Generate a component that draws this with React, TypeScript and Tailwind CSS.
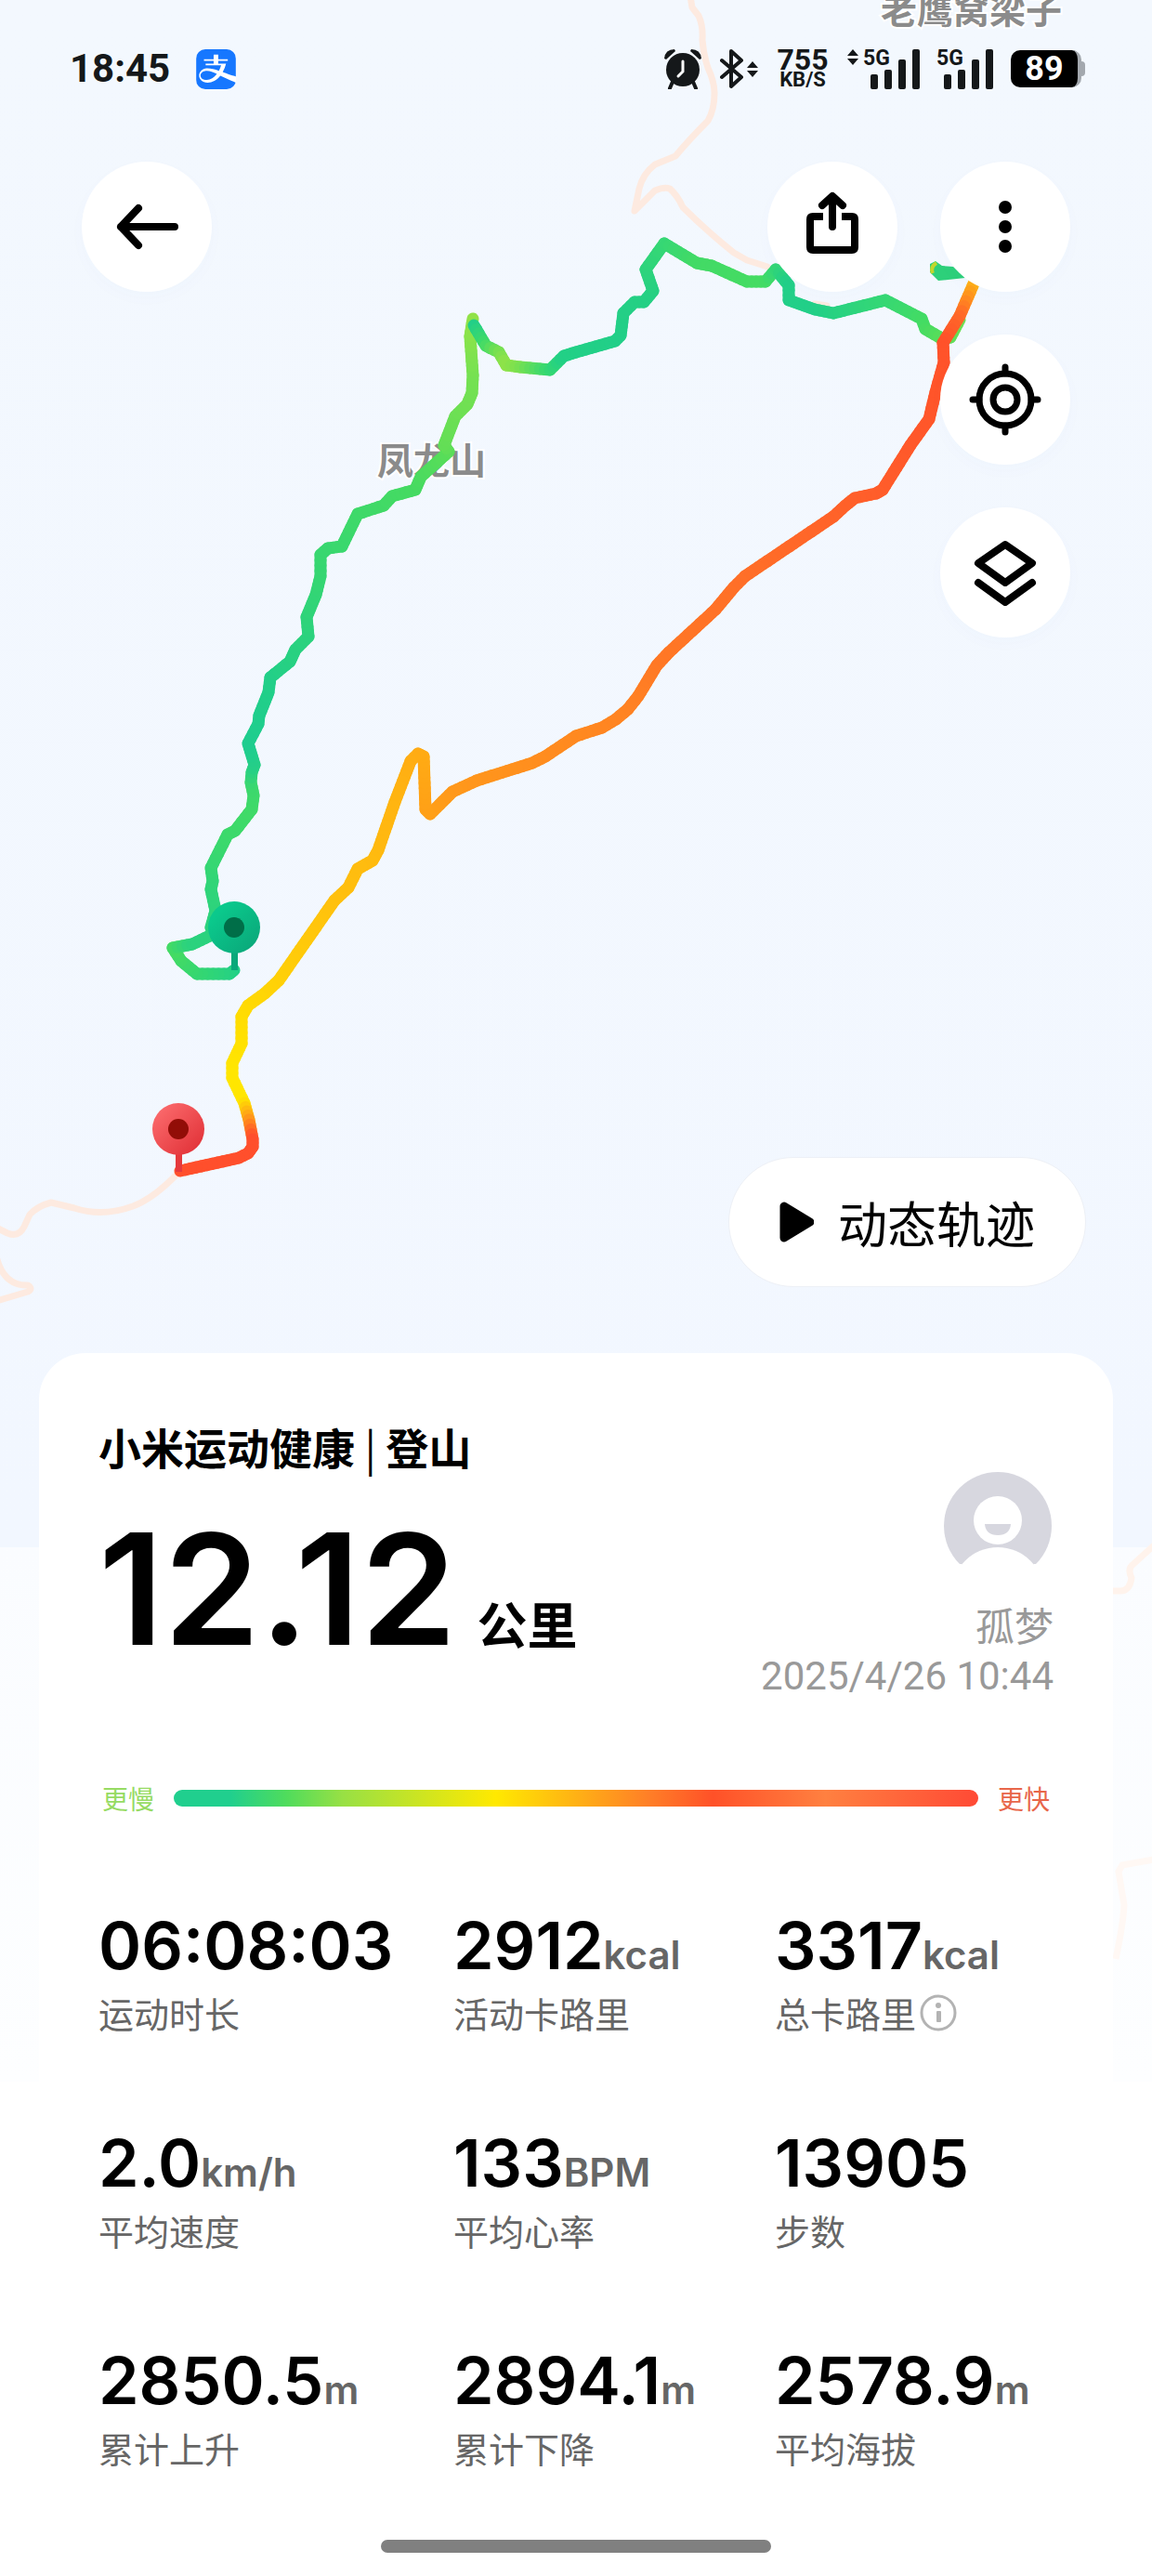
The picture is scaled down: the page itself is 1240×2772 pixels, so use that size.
import React from 'react';
import { SiAlipay } from 'react-icons/si';

type TrackPoint = [number, number, string?];

interface Stat {
  value: string;
  unit?: string;
  label: string;
  info?: boolean;
}

const STATS: Stat[] = [
  { value: '06:08:03', label: '运动时长' },
  { value: '2912', unit: 'kcal', label: '活动卡路里' },
  { value: '3317', unit: 'kcal', label: '总卡路里', info: true },
  { value: '2.0', unit: 'km/h', label: '平均速度' },
  { value: '133', unit: 'BPM', label: '平均心率' },
  { value: '13905', label: '步数' },
  { value: '2850.5', unit: 'm', label: '累计上升' },
  { value: '2894.1', unit: 'm', label: '累计下降' },
  { value: '2578.9', unit: 'm', label: '平均海拔' },
];

// Points without a colour take one between their coloured neighbours
const ASCENT: TrackPoint[] = [
  [252, 1044, '#22cf88'], [247, 1048], [212, 1048, '#33d673'], [195, 1034], [186, 1020, '#45db62'],
  [207, 1016, '#2bd27e'], [230, 1005], [227, 998, '#2bd27e'], [232, 980], [227, 957, '#2fd47a'], [229, 948], [227, 934],
  [245, 898, '#3cd96c'], [253, 894], [271, 871, '#40da68'], [273, 856], [270, 842, '#3cd86d'], [271, 831],
  [274, 823, '#26cf86'], [267, 800, '#1fcd8f'], [278, 779], [279, 770, '#20ce8c'], [289, 745], [291, 729, '#22cf88'],
  [312, 712], [318, 699], [332, 685, '#2bd27e'], [330, 664], [340, 640], [345, 620, '#35d673'], [345, 597],
  [353, 590], [368, 588], [385, 553, '#3ed96a'], [413, 544], [422, 534], [447, 527, '#45da62'], [453, 513],
  [483, 486, '#58dd58'], [478, 479, '#62de56'], [490, 448], [503, 435, '#70e053'], [508, 423], [509, 404, '#74e152'],
  [506, 362, '#86e34c'], [509, 343, '#93e247'],
];

const RIDGE: TrackPoint[] = [
  [510, 350, '#20ce8a'], [523, 372, '#3fda68'], [537, 379, '#72df51'], [545, 393, '#90e248'], [560, 395, '#7de14e'],
  [592, 398, '#35d870'], [607, 383, '#22d086'], [620, 379], [662, 367], [668, 361, '#22cf88'], [671, 337],
  [683, 325], [693, 325], [703, 313, '#26d083'], [695, 290], [715, 262, '#35d775'], [750, 283, '#42da66'],
  [766, 286], [804, 303], [824, 303, '#45dc62'], [835, 290, '#35d775'], [849, 307, '#22cf88'], [849, 323],
  [877, 333, '#22cf88'], [897, 337], [953, 323, '#35d775'], [992, 343], [996, 354, '#45dc62'], [1015, 365],
  [1023, 363], [1033, 344, '#6fdf52'],
];

const DESCENT: TrackPoint[] = [
  [1049, 303, '#ffc012'], [1033, 340, '#ff6c28'], [1015, 369, '#ff522a'], [1016, 390], [1007, 422], [1000, 451, '#ff562a'],
  [980, 479], [950, 527, '#ff5c2a'], [943, 531], [920, 536], [910, 544], [897, 556], [802, 620, '#ff6e28'],
  [790, 632], [770, 656], [720, 702], [707, 716, '#ff7825'], [687, 749], [676, 763], [663, 774, '#ff8422'],
  [648, 783], [620, 792], [587, 814, '#ff8c1f'], [573, 821], [513, 840], [487, 852, '#ff981b'], [470, 869],
  [463, 876], [458, 871, '#ffa017'], [456, 814], [450, 811], [442, 819], [425, 863, '#ffb411'], [407, 915],
  [401, 926], [385, 935], [375, 955], [360, 969, '#ffc00e'], [300, 1055, '#ffcf08'], [285, 1069], [267, 1082],
  [260, 1094, '#ffdc02'], [260, 1123], [250, 1144], [250, 1160, '#ffe600'], [263, 1187, '#ffe600'],
  [268, 1205, '#ffa018'], [272, 1226, '#ff4f2c'], [272, 1234], [267, 1241], [257, 1246], [194, 1260, '#ff4f2c'],
];

const mix = (from: string, to: string, t: number) => {
  const channel = (hex: string, i: number) => parseInt(hex.slice(1 + i * 2, 3 + i * 2), 16);
  const rgb = [0, 1, 2].map((i) => Math.round(channel(from, i) + (channel(to, i) - channel(from, i)) * t));
  return `rgb(${rgb.join(',')})`;
};

// Cuts a track into short pieces so that the colour can follow the speed
const toPieces = (points: TrackPoint[]) => {
  const lengths = [0];
  for (let i = 1; i < points.length; i++) {
    const [x0, y0] = points[i - 1];
    const [x1, y1] = points[i];
    lengths.push(lengths[i - 1] + Math.hypot(x1 - x0, y1 - y0));
  }
  const stops = points.map((p, i) => ({ at: lengths[i], color: p[2] })).filter((s) => s.color);
  const colorAt = (d: number) => {
    const next = Math.max(1, stops.findIndex((s) => s.at >= d));
    const a = stops[next - 1];
    const b = stops[next];
    return mix(a.color!, b.color!, (d - a.at) / (b.at - a.at));
  };
  const pieces: { x1: number; y1: number; x2: number; y2: number; color: string }[] = [];
  for (let i = 1; i < points.length; i++) {
    const [x0, y0] = points[i - 1];
    const [x1, y1] = points[i];
    const len = lengths[i] - lengths[i - 1];
    const count = Math.ceil(len / 6);
    for (let k = 0; k < count; k++) {
      const a = k / count;
      const b = (k + 1) / count;
      pieces.push({
        x1: x0 + (x1 - x0) * a,
        y1: y0 + (y1 - y0) * a,
        x2: x0 + (x1 - x0) * b,
        y2: y0 + (y1 - y0) * b,
        color: colorAt(lengths[i - 1] + len * ((a + b) / 2)),
      });
    }
  }
  return pieces;
};

const Track: React.FC<{ points: TrackPoint[] }> = ({ points }) => (
  <g strokeWidth="13" strokeLinecap="round">
    {toPieces(points).map((p, i) => (
      <line key={i} x1={p.x1} y1={p.y1} x2={p.x2} y2={p.y2} stroke={p.color} />
    ))}
  </g>
);

const Pin: React.FC<{ x: number; y: number; fill: string; stem: string; dot: string }> = ({ x, y, fill, stem, dot }) => (
  <g>
    <rect x={x - 3} y={y + 24} width="7" height="22" fill={stem} />
    <circle cx={x} cy={y} r="28" fill={fill} />
    <circle cx={x} cy={y} r="11" fill={dot} />
  </g>
);

const RouteMap = () => (
  <svg viewBox="0 0 1240 2772" className="absolute inset-x-0 top-0 w-full" aria-hidden="true">
    <defs>
      <linearGradient id="startPin" x1="0" y1="0" x2="1" y2="1">
        <stop offset="0.2" stopColor="#0bc98c" />
        <stop offset="0.9" stopColor="#0aa87a" />
      </linearGradient>
      <linearGradient id="endPin" x1="0" y1="0" x2="1" y2="1">
        <stop offset="0.1" stopColor="#fb6a6c" />
        <stop offset="0.9" stopColor="#e23339" />
      </linearGradient>
    </defs>

    {/* Roads */}
    <g fill="none" stroke="#fdeae0" strokeWidth="7" strokeLinejoin="round" strokeLinecap="round">
      <path d="M743 -4L745 8L752 17Q757 28 756 43Q757 58 762 73Q769 88 769 100Q769 118 762 130Q742 150 727 168L705 177Q692 187 688 203L683 227L705 205Q715 201 721 203Q729 210 735 223Q760 248 790 272L804 280L826 287" />
      <path d="M192 1262Q165 1290 143 1298Q110 1310 80 1300L55 1294Q40 1298 32 1307L26 1320Q20 1332 8 1327L-4 1321" />
      <path d="M-4 1352Q4 1384 30 1383Q36 1387 30 1390L-4 1400" />
      <path d="M877 327L890 329" />
    </g>
    <g fill="none" stroke="#fff3ec" strokeWidth="7">
      <path d="M1242 1663L1220 1683Q1213 1688 1218 1698Q1216 1712 1206 1712L1196 1712" />
      <path d="M1242 2001L1208 2007L1204 2014L1210 2050Q1209 2070 1201 2108" stroke="#fff8f4" />
    </g>

    {/* Place names */}
    <g
      className="font-['Noto_Sans_CJK_SC',sans-serif] font-bold"
      fontSize="39"
      fill="#8b8b8b"
      stroke="#ffffff"
      strokeWidth="4"
      paintOrder="stroke"
    >
      <text x="948" y="25">老鹰窝梁子</text>
      <text x="406" y="510">凤龙山</text>
    </g>

    <Track points={ASCENT} />
    <Track points={RIDGE} />
    <Track points={DESCENT} />
    <path d="M1001 284L1007 281L1014 286L1026 287L1039 299L1010 302L1001 293Z" fill="#2dd07a" />
    <path d="M1008 283Q1001 287 1004 294" fill="none" stroke="#c3d62c" strokeWidth="4" />

    <Pin x={252} y={998} fill="url(#startPin)" stem="#0aa87a" dot="#006e48" />
    <Pin x={192} y={1215} fill="url(#endPin)" stem="#e5393d" dot="#920d07" />
  </svg>
);

const DataArrows: React.FC<{ x: number; y: number }> = ({ x, y }) => (
  <path d={`M${x} ${y + 7}L${x + 6} ${y}L${x + 12} ${y + 7}ZM${x} ${y + 10}L${x + 12} ${y + 10}L${x + 6} ${y + 17}Z`} />
);

const Signal: React.FC<{ active?: boolean }> = ({ active }) => (
  <svg
    viewBox={active ? '-18 0 78 43' : '0 0 60 43'}
    className={active ? 'h-[43px] w-[78px] overflow-visible' : 'h-[43px] w-[60px] overflow-visible'}
    fill="#15181a"
  >
    {active && <DataArrows x={-18} y={0} />}
    <text x="-1" y="17" fontSize="23" className="font-['Roboto',sans-serif] font-bold">5G</text>
    <rect x="7" y="27" width="8" height="16" rx="2" />
    <rect x="22" y="22" width="8" height="21" rx="2" />
    <rect x="37" y="11" width="8" height="32" rx="2" />
    <rect x="52" y="0" width="8" height="43" rx="2" />
  </svg>
);

const StatusBar = () => (
  <div className="flex h-[148px] items-center justify-between pr-[72px] pl-[75px] font-['Roboto',sans-serif] text-[#15181a]">
    <div className="flex items-center gap-7">
      <span className="text-[42px] leading-none font-bold">18:45</span>
      <span className="overflow-hidden rounded-[10px] bg-white">
        <SiAlipay className="size-[43px] text-[#1677ff]" />
      </span>
    </div>
    <div className="flex items-center gap-[19px]">
      <svg viewBox="0 0 42 44" className="h-[44px] w-[42px]">
        <circle cx="21" cy="23" r="18" fill="#15181a" />
        <path d="M1 11Q2 1 12 1L13 3L3 12ZM41 11Q40 1 30 1L29 3L39 12Z" fill="#15181a" />
        <path d="M10 36L7 43M32 36L35 43" stroke="#15181a" strokeWidth="4" strokeLinecap="round" />
        <path d="M21 14V25L16 30" stroke="#ffffff" strokeWidth="3" strokeLinecap="round" fill="none" />
      </svg>
      <svg viewBox="0 0 41 44" className="h-[44px] w-[41px]" fill="#15181a">
        <path d="M2 13L23 31L12 41V3L23 13L2 31" fill="none" stroke="#15181a" strokeWidth="4" strokeLinejoin="round" strokeLinecap="round" />
        <DataArrows x={29} y={14} />
      </svg>
      <div className="flex w-[58px] flex-col items-center font-bold">
        <span className="text-[32px] leading-6">755</span>
        <span className="text-[22px] leading-5">KB/S</span>
      </div>
      <Signal active />
      <Signal />
      <div className="flex items-center">
        <span className="flex h-10 w-[76px] items-center justify-center rounded-[10px] border-r-4 border-[#a3a8ae] bg-black text-[36px] leading-none font-bold text-white">89</span>
        <span className="h-4 w-1 rounded-r-[4px] bg-[#a3a8ae]"></span>
      </div>
    </div>
  </div>
);

const RoundButton: React.FC<{ label: string; children: React.ReactNode }> = ({ label, children }) => (
  <button aria-label={label} className="size-[140px] rounded-full bg-white shadow-[0_6px_20px_rgba(60,100,180,0.02)]">
    <svg viewBox="0 0 140 140" fill="none" stroke="#000000" strokeWidth="8" strokeLinecap="round">
      {children}
    </svg>
  </button>
);

const MapControls = () => (
  <div className="flex items-start justify-between px-[88px] pt-[26px]">
    <RoundButton label="返回">
      <path d="M61 50L42 70L61 90M42 70H100" strokeLinejoin="round" />
    </RoundButton>
    <div className="flex items-start gap-[46px]">
      <RoundButton label="分享">
        <path d="M70 38V70M59 47L70 37L81 47" strokeLinejoin="round" />
        <path d="M60 59H49Q46 59 46 62V92Q46 95 49 95H91Q94 95 94 92V62Q94 59 91 59H80" strokeLinecap="butt" />
      </RoundButton>
      <div className="flex flex-col gap-[46px]">
        <RoundButton label="更多">
          <g fill="#000000" stroke="none">
            <circle cx="70" cy="49" r="7" />
            <circle cx="70" cy="70" r="7" />
            <circle cx="70" cy="91" r="7" />
          </g>
        </RoundButton>
        <RoundButton label="定位">
          <g strokeWidth="7">
            <circle cx="70" cy="70" r="28" />
            <circle cx="70" cy="70" r="13" />
            <path d="M70 35V42M70 98V105M35 70H42M98 70H105" />
          </g>
        </RoundButton>
        <RoundButton label="图层">
          <path d="M70 40L99 60L70 81L41 60Z" strokeLinejoin="round" />
          <path d="M41 81L70 102L99 81" strokeLinejoin="round" />
        </RoundButton>
      </div>
    </div>
  </div>
);

const Avatar = () => (
  <svg viewBox="0 0 116 116" className="mr-[2px] size-[116px]">
    <circle cx="58" cy="58" r="58" fill="#d7d7df" />
    <circle cx="58" cy="52" r="26" fill="#ffffff" />
    <path d="M44 56H72Q71 68 58 68Q45 68 44 56Z" fill="#d7d7df" />
    <circle cx="58" cy="131" r="50" fill="#ffffff" />
    <path d="M0 99H19L58 131L97 99H116V118H0Z" fill="#ffffff" />
  </svg>
);

const App = () => {
  return (
    <div className="relative flex min-h-screen flex-col overflow-hidden bg-[linear-gradient(#f3f8fe_0px,#f2f7ff_1665px,#fafcff_1665px,#fdfeff_2240px,#ffffff_2240px)] font-['Noto_Sans_CJK_SC',sans-serif] text-black">
      <RouteMap />

      <div className="relative flex min-h-[1456px] flex-col justify-between pb-[71px]">
        <div>
          <StatusBar />
          <MapControls />
        </div>
        <div className="flex justify-end px-[71px]">
          <button className="flex h-[140px] items-center gap-[26px] rounded-full border border-[#edf0f6] bg-white px-[54px]">
            <svg viewBox="0 0 37 44" className="h-[44px] w-[37px]">
              <path d="M5 5V39L33 22Z" stroke="#000000" strokeWidth="9" strokeLinejoin="round" />
            </svg>
            <span className="text-[53px] leading-none">动态轨迹</span>
          </button>
        </div>
      </div>

      {/* Workout summary */}
      <main className="relative mx-[42px] flex-1 rounded-t-[50px] bg-white px-16 pt-[72px]">
        <div className="flex justify-between">
          <div>
            <h1 className="text-[46px] leading-[56px] font-bold">
              小米运动健康 <span className="font-normal">|</span> 登山
            </h1>
            <p className="mt-[43px] flex items-baseline gap-[22px]">
              <span className="font-['Inter',sans-serif] text-[166px] leading-none font-semibold">12.12</span>
              <span className="text-[54px] leading-none font-bold">公里</span>
            </p>
          </div>
          <div className="flex flex-col items-end pt-[56px] text-[42px] leading-[56px] text-[#999999]">
            <Avatar />
            <span className="mt-5">孤梦</span>
            <span className="font-['Roboto',sans-serif]">2025/4/26 10:44</span>
          </div>
        </div>

        <div className="mt-[83px] flex items-center gap-[21px] px-1 text-[28px] leading-10">
          <span className="text-[#96db63]">更慢</span>
          <div className="h-[18px] flex-1 rounded-full bg-[linear-gradient(90deg,#20cf8e_0%,#20cf8e_7%,#4fdc5c_14%,#98e044_21%,#ffe900_40%,#ff7f27_59%,#ff5128_67%,#ff8040_81%,#ff4a35_100%)]"></div>
          <span className="text-[#e8664a]">更快</span>
        </div>

        <dl className="mt-[97px] grid grid-cols-[382fr_346fr_300fr] gap-y-24">
          {STATS.map((stat) => (
            <div key={stat.label} className="flex flex-col-reverse justify-end gap-[6px]">
              <dt className="flex items-center gap-1 text-[38px] leading-[48px] text-[#666666]">
                {stat.label}
                {stat.info && (
                  <button aria-label="说明">
                    <svg viewBox="0 0 40 40" className="size-10" fill="#b3b3b3">
                      <circle cx="20" cy="20" r="18" fill="none" stroke="#b3b3b3" strokeWidth="3" />
                      <circle cx="20" cy="12" r="3" />
                      <rect x="18" y="18" width="5" height="12" rx="1" />
                    </svg>
                  </button>
                )}
              </dt>
              <dd className="flex h-[84px] items-baseline font-['Inter',sans-serif] font-semibold">
                <span className="text-[70px] leading-[84px]">{stat.value}</span>
                {stat.unit && <span className="text-[42px] leading-none text-[#666666]">{stat.unit}</span>}
              </dd>
            </div>
          ))}
        </dl>

        <div className="mx-auto mt-[75px] mb-[25px] h-[14px] w-[420px] rounded-full bg-[#808080]"></div>
      </main>
    </div>
  );
};

export default App;
